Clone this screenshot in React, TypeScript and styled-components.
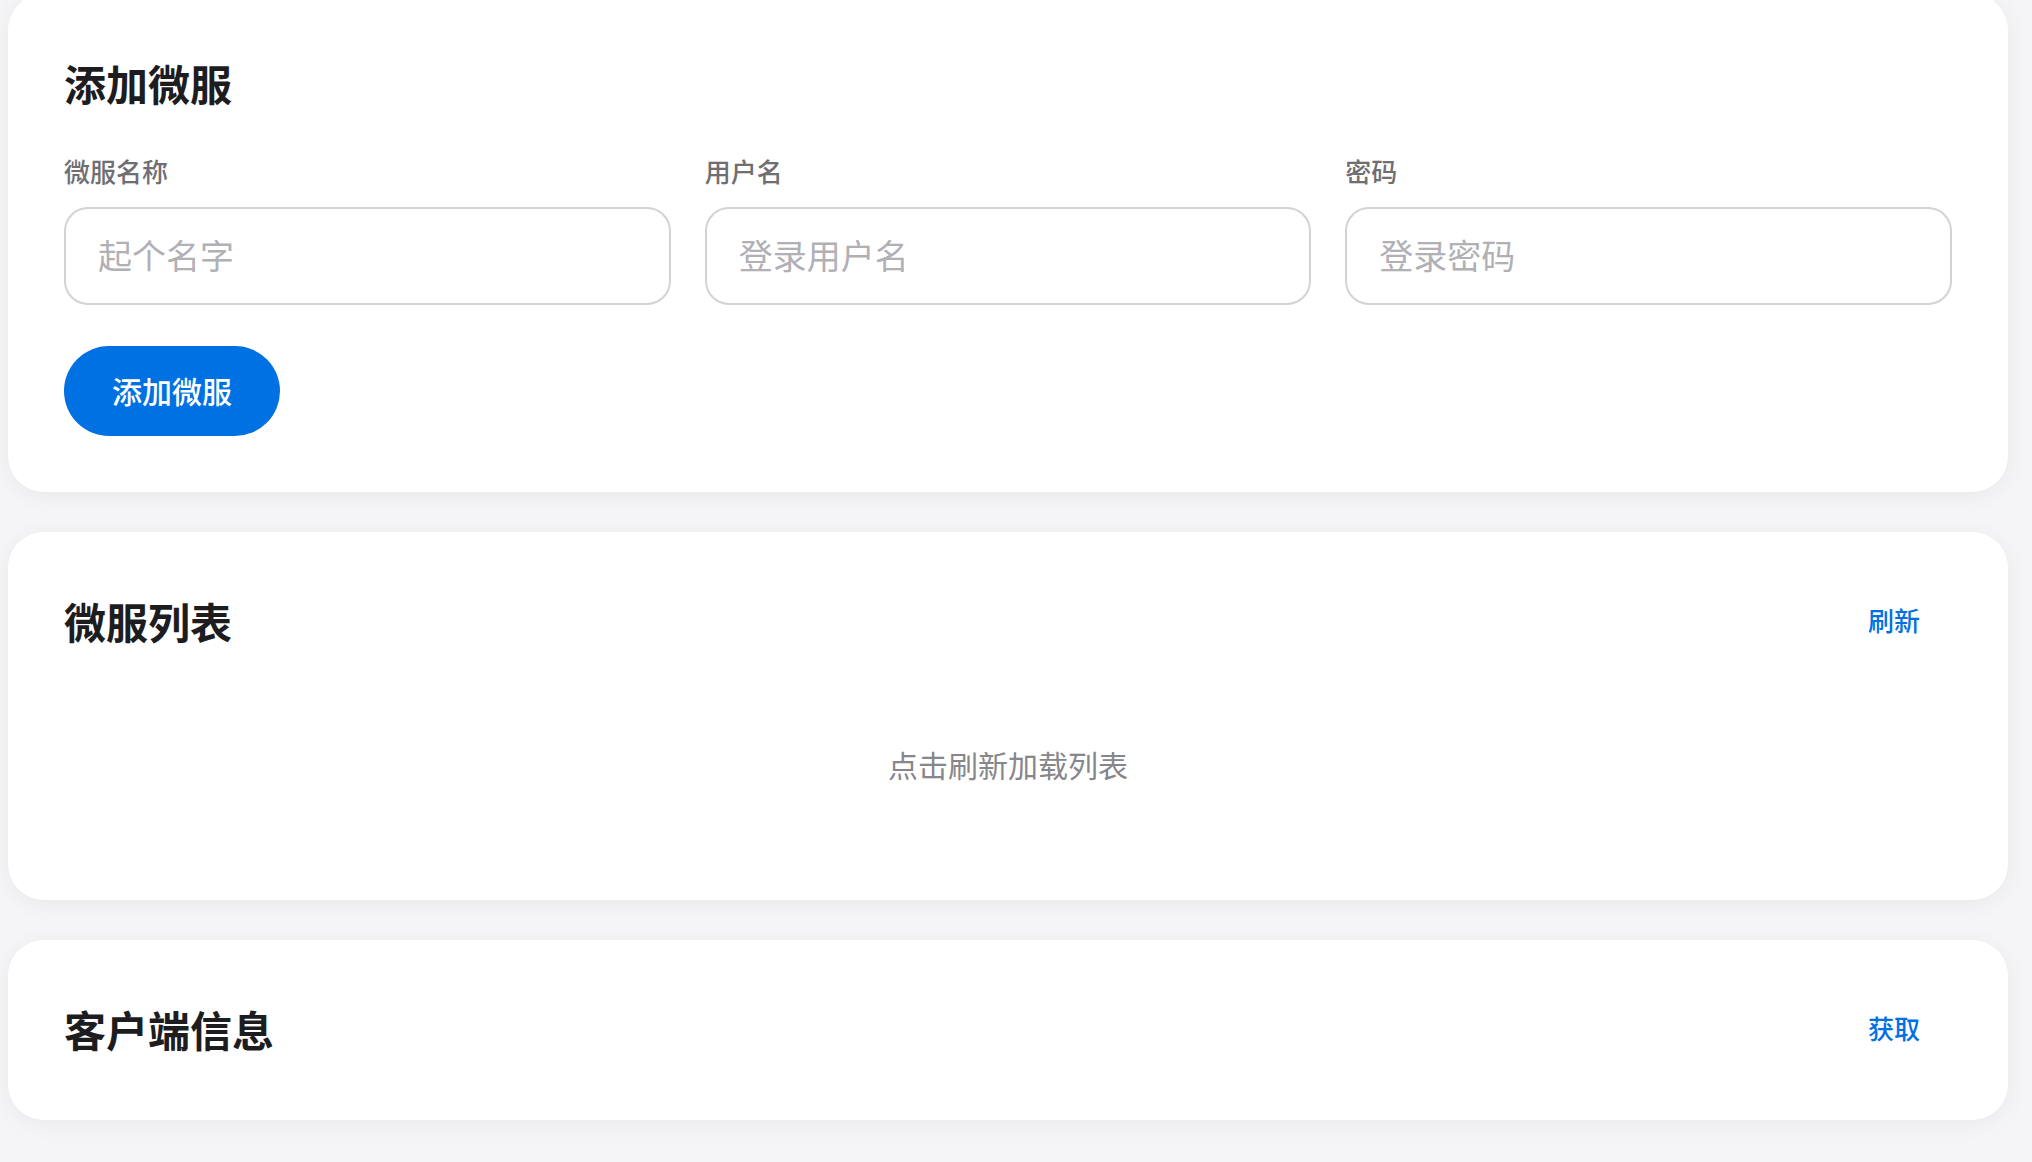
import styled, { createGlobalStyle } from "styled-components";
import { useState } from "react";

const GlobalStyle = createGlobalStyle`
  html, body {
    margin: 0;
    padding: 0;
    background: #f5f5f7;
    font-family: "Noto Sans CJK SC", "Noto Sans", sans-serif;
    color: #1d1d1f;
  }
  * {
    box-sizing: border-box;
  }
`;

const Page = styled.div`
  display: flex;
  flex-direction: column;
  gap: 40px;
  margin-top: -6px;
  padding: 0 24px 43px 8px;
`;

const Card = styled.section`
  background: #ffffff;
  border-radius: 36px;
  padding: 56px;
  box-shadow: 0 4px 24px rgba(0, 0, 0, 0.05);
`;

const Header = styled.div<{ $spaced?: boolean }>`
  display: flex;
  align-items: center;
  justify-content: space-between;
  height: 68px;
  margin-bottom: ${(p) => (p.$spaced ? "36px" : "0")};
`;

const Title = styled.h2`
  margin: 0;
  padding-bottom: 3px;
  font-size: 42px;
  line-height: 50px;
  font-weight: 700;
  color: #1d1d1f;
`;

const LinkButton = styled.button`
  border: none;
  background: transparent;
  padding: 8px 32px 12px;
  font-family: inherit;
  font-size: 26px;
  line-height: 36px;
  font-weight: 500;
  color: #0071e3;
  cursor: pointer;
`;

const FieldGrid = styled.div`
  display: grid;
  grid-template-columns: repeat(3, 1fr);
  gap: 34px;
`;

const Field = styled.label`
  display: flex;
  flex-direction: column;
  gap: 19px;
`;

const FieldLabel = styled.span`
  font-size: 26px;
  line-height: 34px;
  font-weight: 500;
  color: #6e6e73;
`;

const Input = styled.input`
  height: 98px;
  width: 100%;
  border: 2px solid #d2d2d7;
  border-radius: 24px;
  padding: 0 32px 3px;
  font-family: inherit;
  font-size: 34px;
  color: #1d1d1f;
  background: #fff;
  outline: none;

  &::placeholder {
    color: #b0b0b5;
  }
`;

const PrimaryButton = styled.button`
  margin-top: 41px;
  height: 90px;
  padding: 0 48px 3px;
  border: none;
  border-radius: 45px;
  background: #0071e3;
  color: #fff;
  font-family: inherit;
  font-size: 30px;
  font-weight: 500;
  cursor: pointer;
`;

const Empty = styled.div`
  padding: 86px 0 58px;
  text-align: center;
  font-size: 30px;
  line-height: 44px;
  color: #86868b;
`;

const fields = [
  { label: "微服名称", placeholder: "起个名字", type: "text" },
  { label: "用户名", placeholder: "登录用户名", type: "text" },
  { label: "密码", placeholder: "登录密码", type: "password" },
];

export default function App() {
  const [values, setValues] = useState<string[]>(["", "", ""]);

  return (
    <>
      <GlobalStyle />
      <Page>
        <Card>
          <Header $spaced>
            <Title>添加微服</Title>
          </Header>
          <FieldGrid>
            {fields.map((f, i) => (
              <Field key={f.label}>
                <FieldLabel>{f.label}</FieldLabel>
                <Input
                  type={f.type}
                  placeholder={f.placeholder}
                  value={values[i]}
                  onChange={(e) => {
                    const next = [...values];
                    next[i] = e.target.value;
                    setValues(next);
                  }}
                />
              </Field>
            ))}
          </FieldGrid>
          <PrimaryButton>添加微服</PrimaryButton>
        </Card>

        <Card>
          <Header>
            <Title>微服列表</Title>
            <LinkButton>刷新</LinkButton>
          </Header>
          <Empty>点击刷新加载列表</Empty>
        </Card>

        <Card>
          <Header>
            <Title>客户端信息</Title>
            <LinkButton>获取</LinkButton>
          </Header>
        </Card>
      </Page>
    </>
  );
}
